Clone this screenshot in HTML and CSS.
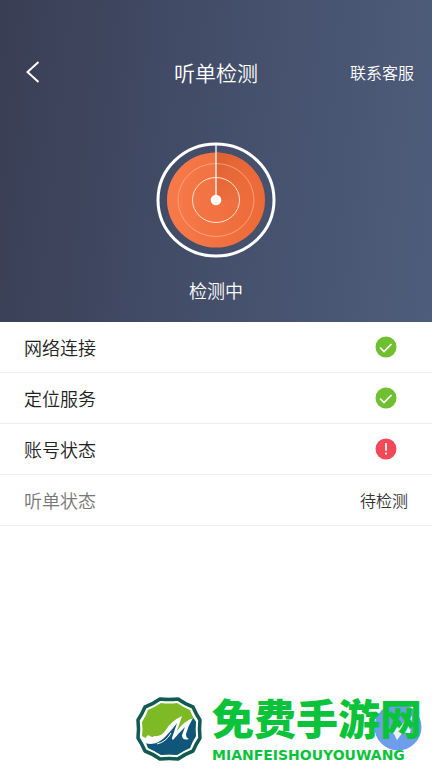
FILE: index.html
```html
<!DOCTYPE html>
<html lang="zh-CN">
	<head>
		<meta charset="UTF-8">
		<meta name="viewport" content="width=device-width, initial-scale=1">
		<title>听单检测</title>
		<link rel="stylesheet" href="styles.css">
	</head>
	<body>
		<header class="hero">
			<nav class="nav">
				<button class="back" aria-label="返回">
					<svg width="14" height="22" viewBox="0 0 14 22">
						<path d="M12.500 1L1.500 11L12.500 21" fill="none" stroke="#fff" stroke-width="2"/>
					</svg>
				</button>
				<h1 class="title">听单检测</h1>
				<a class="service" href="#">联系客服</a>
			</nav>

			<svg class="radar" width="120" height="116" viewBox="0 0 120 116">
				<defs>
					<linearGradient id="disc" x1="0" y1="0" x2="1" y2="0">
						<stop offset="0" stop-color="#f87a4a"/>
						<stop offset="1" stop-color="#ec6a38"/>
					</linearGradient>
					<linearGradient id="sweep" x1="0" y1="0" x2="1" y2="1">
						<stop offset="0" stop-color="#d95f2f"/>
						<stop offset="1" stop-color="#ee6c3a" stop-opacity="0"/>
					</linearGradient>
				</defs>
				<ellipse cx="60" cy="58" rx="49" ry="47.500" fill="url(#disc)"/>
				<path d="M60 58V10.500A49 47.500 0 0 1 109 58Z" fill="url(#sweep)"/>
				<ellipse cx="60" cy="58" rx="58" ry="56" fill="none" stroke="#fff" stroke-width="3"/>
				<ellipse cx="60" cy="58" rx="38" ry="36.500" fill="none" stroke="#fbb795" stroke-width="0.700"/>
				<ellipse cx="60" cy="58" rx="23.500" ry="22.500" fill="none" stroke="#ffe3d4" stroke-width="1"/>
				<path d="M60 2V58" stroke="#fff" stroke-width="1.300"/>
				<circle cx="60" cy="58" r="5.300" fill="#fff"/>
			</svg>
			<p class="progress">检测中</p>
		</header>

		<ul class="checks">
			<li class="check">
				<span>网络连接</span>
				<svg class="icon" viewBox="0 0 22 22" role="img" aria-label="正常">
					<circle cx="11" cy="11" r="10.500" fill="#70bf30"/>
					<path d="M5 11.500L9 15.500L16.500 8" fill="none" stroke="#fff" stroke-width="1.700"/>
				</svg>
			</li>
			<li class="check">
				<span>定位服务</span>
				<svg class="icon" viewBox="0 0 22 22" role="img" aria-label="正常">
					<circle cx="11" cy="11" r="10.500" fill="#70bf30"/>
					<path d="M5 11.500L9 15.500L16.500 8" fill="none" stroke="#fff" stroke-width="1.700"/>
				</svg>
			</li>
			<li class="check">
				<span>账号状态</span>
				<svg class="icon" viewBox="0 0 22 22" role="img" aria-label="异常">
					<circle cx="11" cy="11" r="10.500" fill="#f24958"/>
					<path d="M11 5V12.800M11 14.600V16.600" stroke="#fff" stroke-width="1.700"/>
				</svg>
			</li>
			<li class="check pending">
				<span>听单状态</span>
				<span class="state">待检测</span>
			</li>
		</ul>

		<footer class="brand">
			<svg class="logo" width="68" height="66" viewBox="0 0 68 66">
				<path d="M25 3Q34 4 43 3Q50 8 58 11Q61 18 65 24Q64 33 65 42Q61 48 58 55Q50 58 43 63Q34 62 25 63Q18 58 10 55Q7 48 3 42Q4 33 3 24Q7 18 10 11Q18 8 25 3Z" fill="#fff" stroke="#105a52" stroke-width="3.500" stroke-linejoin="round"/>
				<path d="M26 7Q34 8 42 7Q48 11 55 14Q57 20 61 26Q60 33 61 40Q57 46 55 52Q48 55 42 59Q34 58 26 59Q20 55 13 52Q11 46 7 40Q8 33 7 26Q11 20 13 14Q20 11 26 7Z" fill="#7eba25"/>
				<path d="M10 45Q20 48 29 39L45 22L42 36L57 22L59 23L61 26Q60 33 61 40Q57 46 55 52Q48 55 42 59Q34 58 26 59Q20 55 13 52Q12 48 10 45Z" fill="#10567b"/>
				<path d="M7 40Q8 41 11 42Q12 38 15 40Q18 42 19 40Q26 41 30 35Q36 25 47 20L42 35Q49 25 58 22Q53 30 51 38Q51 42 54 43Q47 45 47 39L50 31Q43 38 38 44Q36 43 38 39L42 27Q36 35 31 40Q25 47 16 48Q10 48 7 45Z" fill="#fff"/>
				<path d="M22 48Q31 46 36 37" fill="none" stroke="#fff" stroke-width="1"/>
			</svg>
			<div class="words">
				<strong class="name">免费手游网</strong>
				<span class="latin">MIANFEISHOUYOUWANG</span>
				<svg class="float" width="48" height="48" viewBox="0 0 48 48">
					<circle cx="24" cy="24" r="23.500" fill="#6d9dec"/>
					<path d="M11 22L20 27L38 13L36 31L29 29L23 37L20 31L12 28Z" fill="#eaf3ff"/>
				</svg>
			</div>
		</footer>
	</body>
</html>
```
FILE: styles.css
```css
* {
	margin: 0;
	padding: 0;
	box-sizing: border-box;
}

body {
	min-height: 100vh;
	display: flex;
	flex-direction: column;
	background: #fff;
	font-family: "Noto Sans CJK SC", sans-serif;
	font-weight: 350;
	color: #222;
}

.hero {
	display: flex;
	flex-direction: column;
	align-items: center;
	padding: 56px 0 16px;
	background: linear-gradient(96deg, #393e54 0%, #434d68 45%, #4e5d7b 100%);
	color: #fff;
}

.nav {
	width: 100%;
	display: grid;
	grid-template-columns: 1fr auto 1fr;
	align-items: center;
	padding: 0 18px;
	margin-bottom: 54px;
}

.back {
	width: 32px;
	height: 32px;
	display: flex;
	align-items: center;
	padding-left: 8px;
	border: none;
	background: none;
	cursor: pointer;
}

.title {
	font-size: 21px;
	font-weight: 350;
	line-height: 32px;
}

.service {
	justify-self: end;
	font-size: 16px;
	line-height: 32px;
	color: #fff;
	text-decoration: none;
}

.progress {
	margin-top: 16px;
	font-size: 18px;
	line-height: 32px;
}

.checks {
	list-style: none;
}

.check {
	display: flex;
	align-items: center;
	justify-content: space-between;
	padding: 12px 24px;
	border-bottom: 1px solid #eee;
	font-size: 18px;
	line-height: 26px;
}

.icon {
	width: 22px;
	height: 22px;
	margin-right: 11px;
}

.pending {
	color: #777;
}

.state {
	font-size: 16px;
	color: #333;
}

.brand {
	display: flex;
	align-items: center;
	justify-content: flex-end;
	gap: 9px;
	margin-top: auto;
	padding: 0 10px 4px 0;
}

.words {
	position: relative;
	display: flex;
	flex-direction: column;
	gap: 6px;
	color: #0bc33a;
}

.name {
	position: relative;
	z-index: 1;
	font-size: 42px;
	font-weight: 900;
	line-height: 46px;
}

.latin {
	position: relative;
	z-index: 1;
	font-family: "DejaVu Sans", sans-serif;
	font-size: 14px;
	font-weight: 700;
	line-height: 18px;
}

.float {
	position: absolute;
	top: 9px;
	right: 0;
}
```
